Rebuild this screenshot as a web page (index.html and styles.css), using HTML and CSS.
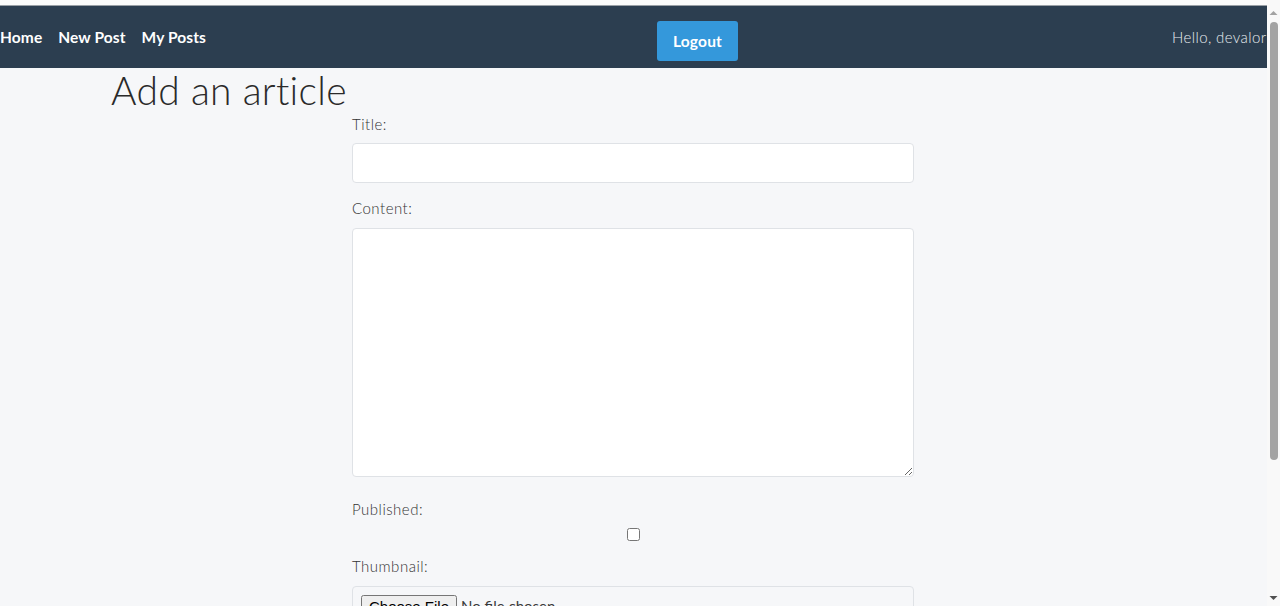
FILE: index.html
```html
<!DOCTYPE html>
<html lang="en">
<head>
<meta charset="utf-8">
<title>Add an article</title>
<link rel="stylesheet" href="styles.css">
</head>
<body>
<div class="topstrip"></div>
<nav class="navbar">
  <ul class="nav-links">
    <li><a href="#" class="nav-link">Home</a></li>
    <li><a href="#" class="nav-link">New Post</a></li>
    <li><a href="#" class="nav-link">My Posts</a></li>
  </ul>
  <button class="btn-logout" type="button">Logout</button>
  <span class="greeting">Hello, devalorian</span>
</nav>
<main class="page">
  <h1 class="page-title">Add an article</h1>
  <form class="article-form">
    <label class="field-label title-label" for="title">Title:</label>
    <input class="form-control" id="title" type="text">
    <label class="field-label content-label" for="content">Content:</label>
    <textarea class="form-control textarea" id="content"></textarea>
    <label class="field-label published" for="published">Published:</label>
    <div class="check-row"><input type="checkbox" id="published" class="checkbox"></div>
    <label class="field-label thumb-label" for="thumb">Thumbnail:</label>
    <div class="file-control">
      <input type="file" id="thumb" class="file-input">
    </div>
    <button class="btn-submit" type="submit">Submit</button>
  </form>
</main>
<div class="scrollbar" aria-hidden="true">
  <svg class="arrow arrow-up" width="13" height="8" viewBox="0 0 13 8"><polygon points="2.5,6 6.5,2 10.5,6" fill="#a3a3a3"/></svg>
  <div class="thumb"></div>
  <svg class="arrow arrow-down" width="13" height="8" viewBox="0 0 13 8"><polygon points="2.5,2 6.5,6 10.5,2" fill="#505050"/></svg>
</div>
</body>
</html>
```
FILE: styles.css
```css
html, body {
  margin: 0;
  padding: 0;
}
body {
  background: #f6f7f9;
  font-family: Lato, "Open Sans", sans-serif;
  color: #3a3a3a;
  overflow-x: hidden;
}
.topstrip {
  height: 5px;
  background: #fbfbfb;
  border-bottom: 1px solid #9aa0a6;
}
.navbar {
  height: 62px;
  background: #2c3e50;
  display: flex;
  align-items: center;
  white-space: nowrap;
  overflow: hidden;
}
.navbar > * {
  flex-shrink: 0;
}
.nav-links {
  list-style: none;
  margin: 0;
  padding: 0;
  display: flex;
  gap: 16px;
  width: 207px;
  margin-top: -1px;
}
.nav-link {
  color: #ffffff;
  text-decoration: none;
  font-size: 15.5px;
  font-weight: 700;
  letter-spacing: 0.1px;
}
.btn-logout {
  margin-left: 450px;
  width: 81px;
  height: 40px;
  margin-top: 7px;
  background: #3498db;
  color: #fff;
  border: none;
  border-radius: 3px;
  font-family: inherit;
  font-size: 15.5px;
  font-weight: 700;
  letter-spacing: 0.2px;
}
.greeting {
  margin-left: 434px;
  color: #e6ebef;
  font-size: 15px;
  font-weight: 300;
  letter-spacing: 0.4px;
  margin-top: -1px;
}
.page {
  padding: 0 0 40px 111px;
}
.page-title {
  margin: 0 0 2px;
  font-size: 39px;
  font-weight: 300;
  line-height: 44px;
  color: #2a2a2a;
  letter-spacing: 0.3px;
}
.article-form {
  width: 562px;
  margin: 0 0 0 241px;
  display: flex;
  flex-direction: column;
}
.field-label {
  display: block;
  font-size: 15px;
  font-weight: 300;
  line-height: 20px;
  color: #333;
  letter-spacing: 0.5px;
  margin-bottom: 9px;
}
.content-label {
  margin-bottom: 10px;
}
.form-control {
  box-sizing: border-box;
  width: 100%;
  height: 40px;
  background: #fff;
  border: 1px solid #dfe2e6;
  border-radius: 4px;
  margin-bottom: 15px;
  font-family: inherit;
}
.textarea {
  height: 249px;
  margin-bottom: 22px;
  resize: vertical;
}
.published {
  margin-bottom: 9px;
}
.check-row {
  display: flex;
  justify-content: center;
  height: 14px;
  margin-bottom: 14px;
}
.checkbox {
  margin: 0;
  width: 13px;
  height: 13px;
}
.thumb-label {
  margin-bottom: 10px;
}
.file-control {
  box-sizing: border-box;
  height: 40px;
  border: 1px solid #dfe2e6;
  border-radius: 4px;
  background: #f6f7f9;
  padding: 8px;
  margin-bottom: 20px;
}
.file-input {
  font-family: inherit;
  font-size: 15px;
}
.btn-submit {
  align-self: flex-start;
  padding: 8px 16px;
  background: #2c3e50;
  color: #fff;
  border: none;
  border-radius: 4px;
}
.scrollbar {
  position: fixed;
  top: 0;
  right: 0;
  bottom: 0;
  width: 13px;
  background: #f9f9f9;
  display: flex;
  flex-direction: column;
  align-items: center;
}
.arrow {
  display: block;
  flex-shrink: 0;
}
.arrow-up {
  margin-top: 9px;
}
.thumb {
  width: 8px;
  height: 438px;
  margin-top: 5px;
  border-radius: 4px;
  background: #a3a3a3;
}
.arrow-down {
  margin-top: auto;
  margin-bottom: 4px;
}
```
